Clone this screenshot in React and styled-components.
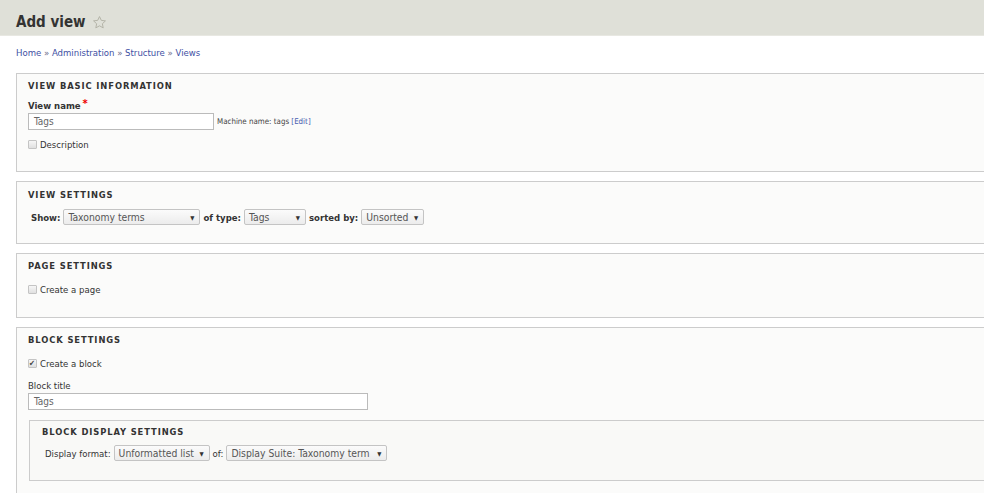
import React from 'react'
import styled, { createGlobalStyle } from 'styled-components'

const GlobalStyle = createGlobalStyle`
  html, body {
    margin: 0;
    padding: 0;
    background: #fff;
    overflow: hidden;
  }
  body {
    font-family: "DejaVu Sans Condensed", "DejaVu Sans", Verdana, sans-serif;
    font-stretch: condensed;
    font-size: 9.5px;
    color: #333;
  }
`

const Star = () => (
  <svg width='15' height='15' viewBox='0 0 24 24' fill='none' stroke='#b4b4a8' strokeWidth='1.6' strokeLinejoin='round'>
    <path d='M12 2.5l2.9 6.1 6.6.8-4.9 4.6 1.3 6.6L12 17.3l-5.9 3.3 1.3-6.6-4.9-4.6 6.6-.8z' />
  </svg>
)

const Select = ({ value, width }) => (
  <SelectBox style={{ width }}>
    <span>{value}</span>
    <Arrow>▼</Arrow>
  </SelectBox>
)

const Checkbox = ({ checked, label }) => (
  <CheckRow>
    <Box>{checked && <Tick>✔</Tick>}</Box>
    {label}
  </CheckRow>
)

const App = () => {
  return (
    <>
      <GlobalStyle />
      <Header>
        <Title>Add view</Title>
        <Star />
      </Header>
      <Breadcrumb>
        <a>Home</a> » <a>Administration</a> » <a>Structure</a> » <a>Views</a>
      </Breadcrumb>
      <Content>
        <Fieldset height={99}>
          <Legend>View basic information</Legend>
          <Label>View name<Required>*</Required></Label>
          <FieldRow>
            <TextInput width={186}>Tags</TextInput>
            <Machine>Machine name: tags <a>[Edit]</a></Machine>
          </FieldRow>
          <Checkbox label='Description' />
        </Fieldset>

        <Fieldset height={63} top={6}>
          <Legend>View settings</Legend>
          <InlineRow top={7}>
            <b>Show:</b>
            <Select value='Taxonomy terms' width={137} />
            <b>of type:</b>
            <Select value='Tags' width={62} />
            <b>sorted by:</b>
            <Select value='Unsorted' width={63} />
          </InlineRow>
        </Fieldset>

        <Fieldset height={65}>
          <Legend>Page settings</Legend>
          <CheckGap />
          <Checkbox label='Create a page' />
        </Fieldset>

        <Fieldset>
          <Legend>Block settings</Legend>
          <CheckGap />
          <Checkbox checked label='Create a block' />
          <PlainLabel>Block title</PlainLabel>
          <TextInput width={340}>Tags</TextInput>
          <Nested>
            <Legend>Block display settings</Legend>
            <InlineRow top={6}>
              <span>Display format:</span>
              <Select value='Unformatted list' width={96} />
              <span>of:</span>
              <Select value='Display Suite: Taxonomy term' width={161} />
            </InlineRow>
          </Nested>
          <PlainLabel>Items per block</PlainLabel>
        </Fieldset>
      </Content>
    </>
  )
}

const Header = styled.div`
  height: 36px;
  background: #dfe0d8;
  border-bottom: 1px solid #e8e8e2;
  display: flex;
  align-items: center;
  gap: 6px;
  padding: 9px 16px 0;
  box-sizing: border-box;
`

const Title = styled.h1`
  margin: 0;
  font-size: 15px;
  font-weight: bold;
  color: #333;
`

const Breadcrumb = styled.div`
  padding: 10px 16px 0;
  height: 37px;
  box-sizing: border-box;
  line-height: 14px;
  font-size: 9.5px;
  color: #6a6a8a;
  a {
    color: #3e4fa3;
    text-decoration: none;
  }
`

const Content = styled.div`
  width: 1100px;
  padding-left: 16px;
  display: flex;
  flex-direction: column;
  gap: 9px;
`

const Fieldset = styled.div`
  border: 1px solid #ccc;
  background: #fbfbfa;
  padding: ${p => p.top ?? 5}px 11px 0;
  height: ${p => (p.height ? `${p.height}px` : 'auto')};
  box-sizing: border-box;
`

const Legend = styled.div`
  font-size: 9.3px;
  font-weight: bold;
  text-transform: uppercase;
  letter-spacing: 0.9px;
  line-height: 14px;
  color: #333;
  margin-bottom: 4px;
`

const Label = styled.div`
  font-weight: bold;
  line-height: 14px;
`

const PlainLabel = styled.div`
  line-height: 14px;
  margin: 8px 0 0;
`

const Required = styled.span`
  color: #e00;
  font-size: 11px;
  vertical-align: 2px;
  margin-left: 2px;
`

const FieldRow = styled.div`
  display: flex;
  align-items: center;
  gap: 3px;
  margin-bottom: 8px;
`

const TextInput = styled.div`
  width: ${p => p.width}px;
  height: 17px;
  border: 1px solid #bbb;
  background: #fff;
  color: #666;
  font-size: 10px;
  line-height: 15px;
  padding: 0 5px;
  box-sizing: border-box;
`

const Machine = styled.span`
  font-size: 7.9px;
  color: #444;
  a {
    color: #4a5bb0;
  }
`

const CheckGap = styled.div`
  height: 6px;
`

const CheckRow = styled.div`
  display: flex;
  align-items: center;
  gap: 3px;
  line-height: 14px;
`

const Box = styled.span`
  width: 7px;
  height: 7px;
  border: 1px solid #c4c4c4;
  border-radius: 1px;
  background: linear-gradient(#f6f6f6, #e0e0e0);
  position: relative;
  margin-top: -2px;
`

const Tick = styled.span`
  position: absolute;
  left: 0;
  top: -3px;
  font-size: 8px;
  color: #444;
`

const InlineRow = styled.div`
  display: flex;
  align-items: center;
  gap: 3px;
  padding-left: 3px;
  margin-top: ${p => p.top}px;
  white-space: nowrap;
  b {
    font-weight: bold;
  }
`

const SelectBox = styled.span`
  height: 16px;
  border: 1px solid #c4c4c4;
  border-radius: 2px;
  background: linear-gradient(#fbfbfb, #ececec);
  color: #555;
  font-size: 10.3px;
  white-space: nowrap;
  display: flex;
  align-items: center;
  justify-content: space-between;
  padding: 0 5px 0 4px;
  box-sizing: border-box;
`

const Arrow = styled.span`
  font-size: 6px;
  color: #333;
`

const Nested = styled.div`
  margin: 10px 0 14px 1px;
  border: 1px solid #ccc;
  background: #f9f9f7;
  padding: 4px 12px 0;
  height: 61px;
  box-sizing: border-box;
`

export default App
